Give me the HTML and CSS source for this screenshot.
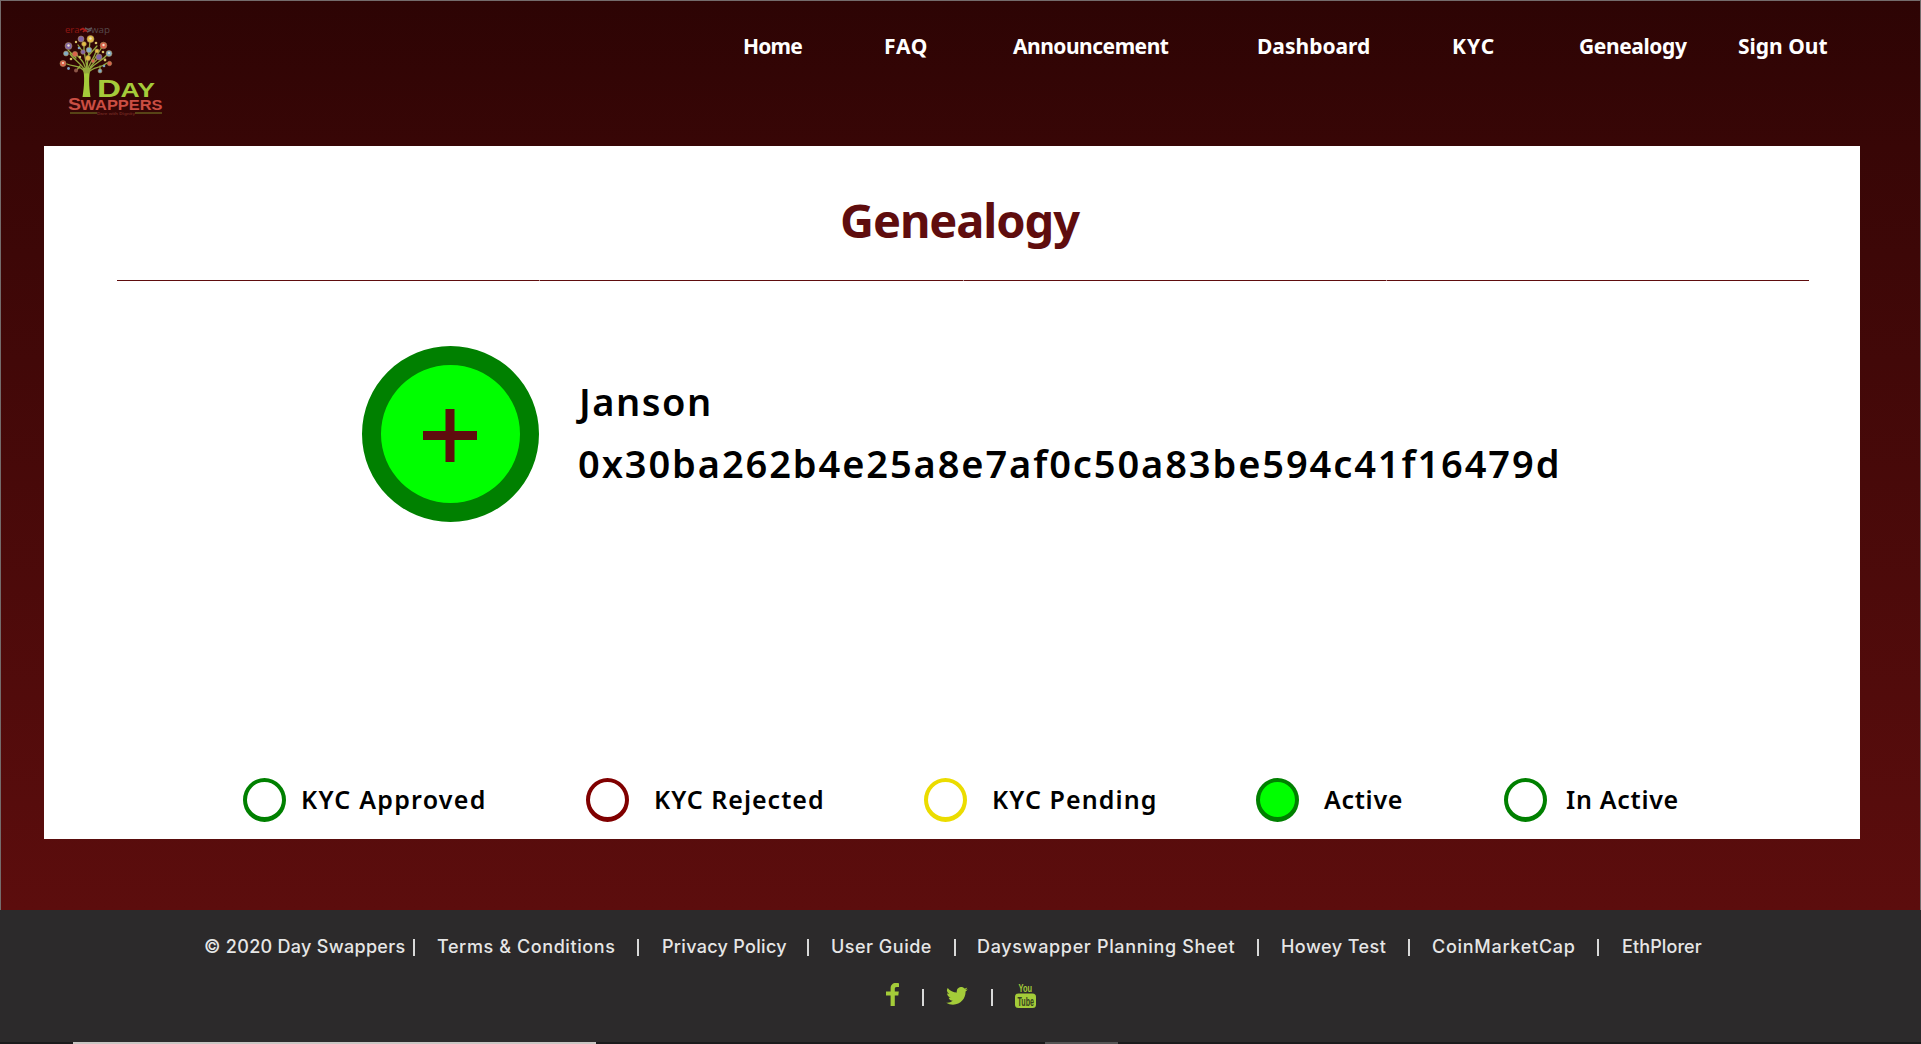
FILE: index.html
```html
<!DOCTYPE html>
<html lang="en">
<head>
<meta charset="utf-8">
<title>Day Swappers - Genealogy</title>
<link rel="stylesheet" href="styles.css">
</head>
<body>
<div class="page">
  <header class="header">
    <svg class="logo" width="150" height="120" viewBox="0 0 150 120">
      <g class="brand-small">
        <text x="25" y="22.700" textLength="14.500" lengthAdjust="spacingAndGlyphs" fill="#8f1713">era</text>
        <text x="51" y="22.700" textLength="19" lengthAdjust="spacingAndGlyphs" fill="#56494b">wap</text>
      </g>
      <path d="M40 20l3-1.500 4 3M43 22l3-3" stroke="#a91c18" stroke-width="1.600" fill="none"/>
      <path d="M45 18l3 1.500 4-1.500M47 22l4-2" stroke="#5f5658" stroke-width="1.600" fill="none"/>
      <path d="M43 58h7.500c-2 9-1.600 18 0 29h-8c1.800-11 2.300-20 .5-29z" fill="#a5cb3a"/>
      <g fill="none" stroke="#93a83c" stroke-width="1.300" stroke-linecap="round">
        <path d="M45 63C43 56 35 57 27 54M46 63C43 54 36 52 30 44M46 62c-1-11-6-13-11-19M47 62C47 49 43 45 44 36M47 62c0-12 2-17 3-31M47.500 62c1-10 6-11 9-22M48 62c3-9 7-9 11-15M48 63c5-7 12-4 19-10M50 59c6-7 11-7 18-15M36 48l-8-8M54 50l8-13M60 56v5M40 56l-4 5M45 45l-7-10M49 45l8-9"/>
      </g>
      <g stroke="#a58b55" stroke-width=".6">
        <g fill="#8264a5"><circle cx="28.500" cy="36" r="3.500"/><circle cx="43" cy="42" r="2.300"/><circle cx="59" cy="47" r="3"/><circle cx="41" cy="29" r="3"/></g>
        <g fill="#e5bd45"><circle cx="50.500" cy="29" r="3.500"/><circle cx="57" cy="41" r="2"/><circle cx="48" cy="48" r="2.600"/><circle cx="44" cy="34" r="2.300"/></g>
        <g fill="#db604b"><circle cx="63.500" cy="35.500" r="3.300"/><circle cx="35" cy="44" r="2.600"/><circle cx="53" cy="51" r="1.700"/><circle cx="23" cy="53.500" r="3"/><circle cx="69.500" cy="53.500" r="2.200"/></g>
        <g fill="#83acc4"><circle cx="26" cy="43.500" r="2.500"/><circle cx="69" cy="43.500" r="3"/><circle cx="49" cy="40" r="2.800"/><circle cx="60" cy="61" r="2"/></g>
      </g>
      <g fill="#d9c067"><circle cx="36" cy="32" r="1.200"/><circle cx="56" cy="33" r="1.300"/><circle cx="31" cy="49" r="1.300"/><circle cx="63" cy="42" r="1.300"/><circle cx="65" cy="50" r="1.400"/><circle cx="40" cy="47" r="1.200"/></g>
      <g fill="#7f9fc0"><circle cx="28.500" cy="58.500" r="1.400"/><circle cx="64" cy="56" r="1.300"/><circle cx="39" cy="38" r="1.300"/></g>
      <circle cx="36" cy="60.500" r="2" fill="#8c5547"/>
      <g fill="#efe1c9"><circle cx="28.500" cy="35.500" r="1.200"/><circle cx="50.500" cy="28.500" r="1.200"/><circle cx="63.500" cy="35" r="1.200"/><circle cx="69" cy="43" r="1.100"/><circle cx="23" cy="53" r="1.100"/></g>
      <g class="brand" fill="#a5cb3a">
        <text x="57" y="86.700" font-size="24.500" textLength="24" lengthAdjust="spacingAndGlyphs">D</text>
        <text x="80.500" y="86.700" font-size="21" textLength="34.500" lengthAdjust="spacingAndGlyphs">AY</text>
      </g>
      <g class="brand" fill="#cb4e43">
        <text x="28" y="100" font-size="16" textLength="13" lengthAdjust="spacingAndGlyphs">S</text>
        <text x="40.500" y="100" font-size="14" textLength="82" lengthAdjust="spacingAndGlyphs">WAPPERS</text>
      </g>
      <path d="M30 103h27M95 103h27" stroke="#63591c" stroke-width="1.500"/>
      <text class="motto" x="57" y="104.500" textLength="38" lengthAdjust="spacingAndGlyphs">Dare with Dignity</text>
    </svg>
    <nav class="nav">
      <a class="n1">Home</a><a class="n2">FAQ</a><a class="n3">Announcement</a><a>Dashboard</a><a class="n5">KYC</a><a class="n6">Genealogy</a><a>Sign Out</a>
    </nav>
  </header>

  <main class="card">
    <h1 class="title">Genealogy</h1>
    <div class="rule"><i></i><i></i><i></i><i></i></div>
    <section class="member">
      <div class="node">
        <svg width="54" height="53" viewBox="0 0 54 53"><path d="M22.500 0h9v22H54v9H31.500v22h-9V31H0v-9h22.500z" fill="#5f0d0e"/></svg>
      </div>
      <div class="who">
        <div class="name">Janson</div>
        <div class="address">0x30ba262b4e25a8e7af0c50a83be594c41f16479d</div>
      </div>
    </section>
    <div class="legend">
      <i class="ring"></i><span class="l1">KYC Approved</span>
      <i class="ring rejected"></i><span class="l2">KYC Rejected</span>
      <i class="ring pending"></i><span class="l3">KYC Pending</span>
      <i class="ring active"></i><span>Active</span>
      <i class="ring"></i><span>In Active</span>
    </div>
  </main>
</div>

<footer class="footer">
  <div class="links">
    <span class="f1">© 2020 Day Swappers</span><b></b>
    <a class="f2">Terms &amp; Conditions</a><b></b>
    <a class="f3">Privacy Policy</a><b></b>
    <a class="f4">User Guide</a><b></b>
    <a class="f5">Dayswapper Planning Sheet</a><b></b>
    <a class="f6">Howey Test</a><b></b>
    <a class="f7">CoinMarketCap</a><b></b>
    <a class="f8">EthPlorer</a>
  </div>
  <div class="social">
    <svg width="13" height="24" viewBox="0 0 13 24"><path d="M13 .2v3.700h-2.200c-1.700 0-2 .8-2 2v2.600h4l-.5 4H8.800V23H4.600V12.500H0v-4h4.600V5.400C4.600 1.900 6.700 0 9.800 0c1.500 0 2.700.1 3.200.2z"/></svg>
    <b></b>
    <svg class="bird" width="22" height="18" viewBox="0 0 24 20"><path d="M24 2.400c-.9.400-1.800.7-2.800.8 1-.6 1.800-1.600 2.200-2.700-1 .6-2 1-3.100 1.200A4.900 4.900 0 0 0 11.900 6.200C7.800 6 4.200 4.100 1.700 1A4.900 4.900 0 0 0 3.200 7.600c-.8 0-1.600-.2-2.200-.6 0 2.300 1.600 4.400 3.900 4.900-.7.200-1.500.2-2.200.1.600 2 2.400 3.400 4.600 3.400A9.900 9.900 0 0 1 0 17.400 14 14 0 0 0 7.500 19.600c9.100 0 14.300-7.700 14-14.600 1-.7 1.800-1.600 2.500-2.600z"/></svg>
    <b></b>
    <svg class="video" width="21" height="25" viewBox="0 0 21 25">
      <text class="tube" x="3.500" y="9" font-size="11.500" textLength="13.500" lengthAdjust="spacingAndGlyphs">You</text>
      <path d="M3.500 10.500h14Q21 10.500 21 14v7.500q0 3.500-3.500 3.500h-14Q0 25 0 21.500V14q0-3.500 3.500-3.500z"/>
      <text class="tube" x="2.500" y="22.500" font-size="12" textLength="16.500" lengthAdjust="spacingAndGlyphs" fill="#35411f">Tube</text>
    </svg>
  </div>
  <div class="edge"><i></i><i></i></div>
</footer>
</body>
</html>
```
FILE: styles.css
```css
* { box-sizing: border-box; }
body {
  margin: 0;
  width: 1921px;
  height: 1044px;
  overflow: hidden;
  font-family: "Noto Sans", sans-serif;
}
.page {
  height: 910px;
  padding: 0 60px 0 43px;
  border: 1px solid #746c6c;
  border-bottom: 0;
  background: linear-gradient(#2d0404, #380606 16%, #5c0d0d);
}
.header {
  display: flex;
  height: 145px;
  padding-top: 9px;
}
.logo { flex: none; margin-left: -4px; }
.brand { font-family: "Liberation Sans", sans-serif; font-weight: 700; }
.brand-small { font: 9px "Open Sans", sans-serif; }
.motto { font: 700 4px "Liberation Sans", sans-serif; fill: #6d2620; }
.nav {
  display: grid;
  grid-template-columns: 141px 129px 244px 195px 127px 159px 100px;
  margin: 21px 0 0 553px;
  color: #fff;
  font-size: 21px;
  font-weight: 700;
  line-height: 30px;
  height: 30px;
  white-space: nowrap;
}
.n1 { letter-spacing: -.8px; }
.n2 { letter-spacing: .8px; }
.n3 { letter-spacing: -.5px; }
.n5 { letter-spacing: 1px; }
.n6 { letter-spacing: -.4px; }

.card {
  display: flex;
  flex-direction: column;
  height: 693px;
  padding-top: 44px;
  background: #fff;
  color: #000;
}
.title {
  margin: 0 0 0 796px;
  font-size: 47px;
  font-weight: 700;
  line-height: 60px;
  letter-spacing: -1.100px;
  color: #5f0d0e;
}
.rule {
  display: flex;
  gap: 1px;
  height: 1px;
  margin: 30px 51px 0 73px;
  background: #b98f8f;
}
.rule i { flex: 1; background: #5f0d0e; }
.member {
  display: flex;
  margin: 65px 0 0 318px;
}
.node {
  display: flex;
  align-items: center;
  justify-content: center;
  width: 177px;
  height: 176px;
  border: 19px solid #008000;
  border-radius: 50%;
  background: #0f0;
}
.node svg { margin: 2px 1px 0 0; }
.who {
  padding: 24px 0 0 39px;
  font-size: 38px;
  font-weight: 600;
  line-height: 62px;
}
.name { margin-left: 1px; letter-spacing: 1.500px; }
.address { letter-spacing: 1.900px; }
.legend {
  display: grid;
  grid-template-columns: 58px 285px 68px 270px 68px 264px 68px 180px 62px 130px;
  margin: auto 0 17px 199px;
  font-size: 25px;
  font-weight: 600;
  line-height: 43px;
  letter-spacing: .7px;
  white-space: nowrap;
}
.ring {
  width: 43px;
  height: 44px;
  border: 4px solid #008000;
  border-bottom-width: 5px;
  border-radius: 50%;
}
.rejected { border-color: #800000; }
.pending { border-color: #ebdc00; }
.active { background: #0f0; }
.l1 { letter-spacing: 1.250px; }
.l2 { letter-spacing: 1px; }
.l3 { letter-spacing: 1.100px; }

.footer {
  display: flex;
  flex-direction: column;
  height: 134px;
  padding-top: 25px;
  background: #2c2a2b;
  color: #e6e6e6;
}
.links {
  display: grid;
  grid-template-columns: 209px 24px 200px 25px 145px 24px 123px 23px 280px 24px 127px 24px 165px 25px 90px;
  align-items: center;
  margin-left: 204px;
  font: 500 18px/24px Inter, sans-serif;
  white-space: nowrap;
}
.footer b {
  width: 2px;
  height: 17px;
  background: #d9d9d9;
}
.f1 { letter-spacing: .3px; }
.f2 { letter-spacing: .6px; }
.f3 { letter-spacing: .3px; }
.f4 { letter-spacing: .5px; }
.f5 { letter-spacing: .66px; }
.f6 { letter-spacing: .45px; }
.f7 { letter-spacing: .72px; }
.f8 { letter-spacing: .1px; }
.social {
  display: grid;
  grid-template-columns: 36px 25px 44px 24px 21px;
  margin: 24px 0 0 886px;
  fill: #a4cc39;
}
.social b { margin-top: 6px; }
.bird { margin: 4px 0 0 -1px; }
.video { overflow: visible; }
.tube { font-family: "Liberation Sans", sans-serif; font-weight: 700; }
.edge {
  display: flex;
  gap: 449px;
  height: 2px;
  margin-top: auto;
  padding-left: 73px;
  background: #1b1b1c;
}
.edge i:first-child { width: 523px; background: #c9c6c3; }
.edge i:last-child { width: 73px; background: #555; }
```
